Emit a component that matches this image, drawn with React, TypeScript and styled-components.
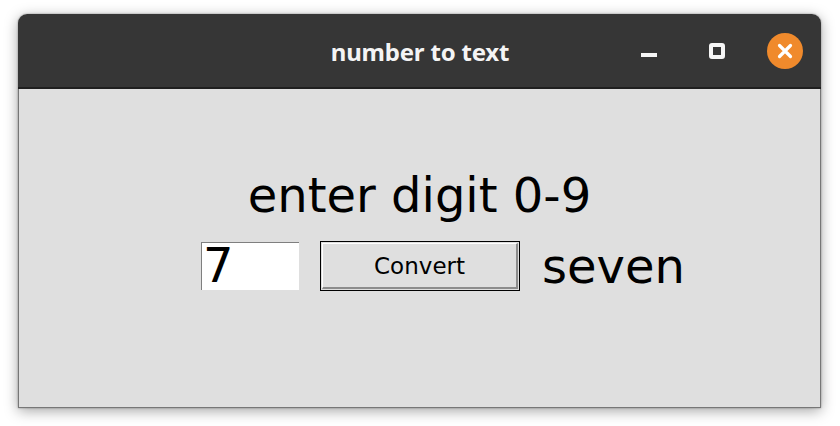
import React from "react";
import styled, { createGlobalStyle } from "styled-components";

const Global = createGlobalStyle`
  html, body { margin: 0; padding: 0; background: #ffffff; }
  #root { width: 840px; height: 426px; }
`;

const Page = styled.div`
  width: 840px;
  height: 426px;
  box-sizing: border-box;
  padding: 14px 19px 18px 18px;
  display: flex;
`;

const Window = styled.div`
  flex: 1;
  display: flex;
  flex-direction: column;
  border-radius: 9px 9px 0 0;
  box-shadow: 0 3px 14px rgba(0, 0, 0, 0.35), 0 0 2px rgba(0, 0, 0, 0.4);
  overflow: hidden;
`;

const TitleBar = styled.div`
  height: 73px;
  background: #363636;
  border-bottom: 2px solid #1f1f1f;
  position: relative;
  display: flex;
  align-items: center;
  justify-content: center;
`;

const Title = styled.div`
  font-family: "Noto Sans", "DejaVu Sans", sans-serif;
  font-weight: 700;
  font-size: 24px;
  color: #f4f4f4;
  letter-spacing: -0.2px;
  margin-left: 1px;
  margin-top: 1px;
`;

const Controls = styled.div`
  position: absolute;
  right: 18px;
  top: 0;
  bottom: 0;
  display: flex;
  align-items: center;
  gap: 32px;
`;

const CtrlSlot = styled.div`
  width: 36px;
  height: 36px;
  display: flex;
  align-items: center;
  justify-content: center;
`;

const MinBar = styled.div`
  width: 16px;
  height: 4px;
  background: #f6f6f6;
  margin-top: 8px;
`;

const MaxBox = styled.div`
  width: 16px;
  height: 16px;
  box-sizing: border-box;
  border: 4px solid #f6f6f6;
  border-radius: 3px;
`;

const CloseCircle = styled.div`
  width: 36px;
  height: 36px;
  border-radius: 50%;
  background: #f08a2c;
  display: flex;
  align-items: center;
  justify-content: center;
`;

const Body = styled.div`
  flex: 1;
  background: #dfdfdf;
  border: 1px solid #777777;
  border-top: none;
  display: flex;
  flex-direction: column;
  align-items: center;
  padding-top: 78px;
`;

const BigText = styled.div<{ $shift?: number }>`
  font-family: "DejaVu Sans", "Verdana", sans-serif;
  font-size: 48px;
  color: #000;
  line-height: normal;
  margin-left: ${(p) => p.$shift ?? 0}px;
`;

const Row = styled.div`
  display: flex;
  align-items: center;
  margin-top: 15px;
  padding-left: 47px;
`;

const Entry = styled.div`
  width: 98px;
  height: 48px;
  box-sizing: border-box;
  background: #ffffff;
  border-top: 1px solid #7f7f7f;
  border-left: 1px solid #7f7f7f;
  font-family: "DejaVu Sans", sans-serif;
  font-size: 48px;
  line-height: 44px;
  padding-left: 1px;
  color: #000;
`;

const ButtonOuter = styled.div`
  width: 200px;
  height: 50px;
  box-sizing: border-box;
  border: 1px solid #000;
  padding: 1px;
  margin-left: 21px;
  margin-right: 20px;
  display: flex;
`;

const ButtonInner = styled.div`
  flex: 1;
  box-sizing: border-box;
  border-top: 1px solid #ffffff;
  border-left: 1px solid #ffffff;
  border-right: 2px solid #8c8c8c;
  border-bottom: 2px solid #8c8c8c;
  display: flex;
  align-items: center;
  justify-content: center;
  font-family: "DejaVu Sans", sans-serif;
  font-size: 23px;
  color: #000;
  padding-top: 1px;
`;

export default function App() {
  return (
    <>
      <Global />
      <Page>
        <Window>
          <TitleBar>
            <Title>number to text</Title>
            <Controls>
              <CtrlSlot>
                <MinBar />
              </CtrlSlot>
              <CtrlSlot>
                <MaxBox />
              </CtrlSlot>
              <CloseCircle>
                <svg width="16" height="16" viewBox="0 0 16 16">
                  <path
                    d="M2.5 2.5 L13.5 13.5 M13.5 2.5 L2.5 13.5"
                    stroke="#ffffff"
                    strokeWidth="3.2"
                    strokeLinecap="round"
                  />
                </svg>
              </CloseCircle>
            </Controls>
          </TitleBar>
          <Body>
            <BigText>enter digit 0-9</BigText>
            <Row>
              <Entry>7</Entry>
              <ButtonOuter>
                <ButtonInner>Convert</ButtonInner>
              </ButtonOuter>
              <BigText $shift={2}>seven</BigText>
            </Row>
          </Body>
        </Window>
      </Page>
    </>
  );
}
